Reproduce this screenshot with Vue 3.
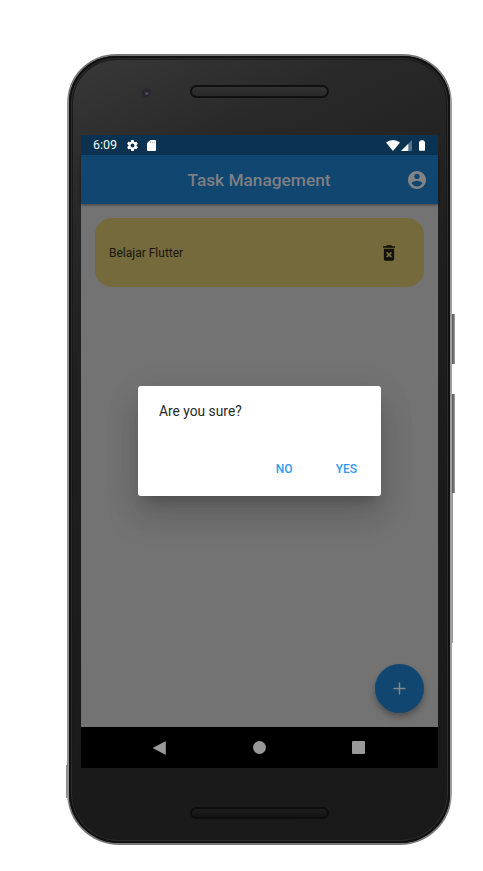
<script setup>
import { ref } from 'vue'

const tasks = ref([{ id: 1, name: 'Belajar Flutter' }])
</script>

<template>
  <main class="stage">
    <div class="phone">
      <i class="key power"></i>
      <i class="key volume"></i>
      <i class="key rail"></i>
      <i class="key edge"></i>
      <div class="face">
        <header class="forehead">
          <i class="camera"></i>
          <i class="grille"></i>
        </header>
        <section class="screen">
          <div class="status">
            <span class="clock">6:09</span>
            <svg class="gear" viewBox="2 2 20 20"><path fill="#fff" fill-rule="evenodd" d="M19.400 13a7.500 7.500 0 0 0 0-2l2.100-1.600a.5.5 0 0 0 .1-.6l-2-3.500a.5.5 0 0 0-.6-.2l-2.500 1a7.300 7.300 0 0 0-1.700-1l-.4-2.600A.5.5 0 0 0 14 2h-4a.5.5 0 0 0-.5.4l-.4 2.700a7.300 7.300 0 0 0-1.700 1l-2.500-1a.5.5 0 0 0-.6.200l-2 3.500a.5.5 0 0 0 .1.600L4.600 11a7.500 7.500 0 0 0 0 2l-2.100 1.600a.5.5 0 0 0-.1.600l2 3.500c.1.200.4.300.6.200l2.500-1a7.300 7.300 0 0 0 1.700 1l.4 2.700c0 .2.200.4.400.4h4c.2 0 .4-.2.500-.4l.4-2.700a7.300 7.300 0 0 0 1.700-1l2.500 1c.2.100.5 0 .6-.2l2-3.500a.5.5 0 0 0-.1-.6zM12 15.500a3.500 3.500 0 1 1 0-7 3.500 3.500 0 0 1 0 7z"/></svg>
            <svg class="sd" viewBox="0 0 10 12"><path fill="#fff" d="M3.500 0H9q1 0 1 1v10q0 1-1 1H1q-1 0-1-1V3.500z"/><path fill="#0b3351" fill-opacity=".35" d="M3.400 1.500h1v2h-1zM5.400 1.500h1v2h-1zM7.400 1.500h1v2h-1z"/></svg>
            <svg class="wifi" viewBox="0 0 14 11"><path fill="#fff" d="M0 2.600Q3.100 0 7 0t7 2.600L7 11z"/></svg>
            <svg class="signal" viewBox="0 0 12 12"><path fill="#55718a" d="M12 0v12H0z"/><path fill="#fff" d="M8 4v8H0z"/></svg>
            <svg class="battery" viewBox="0 0 7 12"><path fill="#fff" d="M1.500 0h4v1H6q1 0 1 1v9q0 1-1 1H1q-1 0-1-1V2q0-1 1-1h.5z"/></svg>
          </div>
          <div class="appbar">
            <h1>Task Management</h1>
            <svg class="account" viewBox="2 2 20 20"><path fill="#828488" d="M12 2C6.480 2 2 6.480 2 12s4.480 10 10 10 10-4.480 10-10S17.520 2 12 2zm0 3c1.660 0 3 1.340 3 3s-1.340 3-3 3-3-1.340-3-3 1.340-3 3-3zm0 14.200a7.200 7.200 0 0 1-6-3.220c.03-1.990 4-3.080 6-3.080 1.990 0 5.970 1.090 6 3.080a7.200 7.200 0 0 1-6 3.220z"/></svg>
          </div>
          <div class="content">
            <article v-for="task in tasks" :key="task.id" class="task">
              <span>{{ task.name }}</span>
              <svg class="trash" viewBox="5 3 14 18"><path fill="#11100a" fill-rule="evenodd" d="M6 19c0 1.100.9 2 2 2h8c1.100 0 2-.9 2-2V7H6zM8.460 11.880l1.410-1.410L12 12.590l2.120-2.120 1.410 1.410L13.410 14l2.120 2.120-1.410 1.410L12 15.410l-2.120 2.120-1.410-1.410L10.590 14zM15.500 4l-1-1h-5l-1 1H5v2h14V4z"/></svg>
            </article>
            <button class="fab" aria-label="Add">
              <svg viewBox="0 0 14 14"><path stroke="#858789" stroke-width="1.600" d="M7 .5v13M.5 7h13"/></svg>
            </button>
            <div class="dialog">
              <p>Are you sure?</p>
              <div class="actions">
                <button>NO</button>
                <button>YES</button>
              </div>
            </div>
          </div>
          <nav class="navbar">
            <svg class="back" viewBox="0 0 13 14"><path fill="#999" d="M12 .4q.8-.2.800.700v11.800q0 .9-.8.700L.4 7.400q-.5-.4 0-.8z"/></svg>
            <i class="home"></i>
            <i class="recent"></i>
          </nav>
        </section>
        <footer class="chin"><i class="grille low"></i></footer>
      </div>
    </div>
  </main>
</template>

<style>
body {
  background: #fff;
}
</style>

<style scoped>
* {
  box-sizing: border-box;
}
.stage {
  width: 483px;
  height: 871px;
  padding: 54px 0 0 67px;
  font-family: Roboto, "Liberation Sans", sans-serif;
  overflow: hidden;
}
.phone {
  position: relative;
  width: 385px;
  height: 791px;
  padding: 2px;
  border-radius: 49px 49px 52px 52px;
  background: linear-gradient(90deg, #777 0, #aaa 1px, #777 2px, #777 383px, #bbb 384px, #888 385px);
}
.key {
  position: absolute;
  left: 385px;
  width: 3px;
  background: linear-gradient(90deg, #555, #777 60%, #aaa);
}
.power {
  top: 260px;
  height: 50px;
}
.volume {
  top: 340px;
  height: 99px;
}
.rail {
  top: 439px;
  width: 1px;
  height: 150px;
  background: #999;
}
.edge {
  left: -1px;
  top: 711px;
  width: 1px;
  height: 33px;
  background: #888;
}
.face {
  display: flex;
  flex-direction: column;
  width: 381px;
  height: 787px;
  padding: 0 12px;
  border-radius: 47px 47px 50px 50px;
  background: linear-gradient(155deg, #393939 0, #292929 15%, #1f1f1f 35%, #1b1b1b 60%, #191919 100%);
  box-shadow: inset 0 0 0 2px #111, inset 0 0 0 3px #2d2d2d, inset 0 0 0 4px #191919;
}
.forehead {
  display: flex;
  flex: 0 0 79px;
  align-items: flex-start;
}
.camera {
  width: 12px;
  height: 12px;
  margin: 30px 0 0 58px;
  border-radius: 50%;
  background: radial-gradient(circle at 65% 62%, #57485a 0 1px, #2a2634 2px, #28262c 4px, #313131 6px);
}
.grille {
  width: 139px;
  height: 13px;
  margin: 29px 0 0 39px;
  border: 2px solid #101010;
  border-radius: 7px;
  background: linear-gradient(#323232, #292929);
}
.screen {
  display: flex;
  flex: 0 0 633px;
  flex-direction: column;
  width: 357px;
}
.status {
  display: flex;
  flex: 0 0 20px;
  align-items: center;
  padding: 0 12px;
  background: #0b3351;
  color: #f4f6f8;
}
.clock {
  width: 34px;
  font-size: 12.500px;
  line-height: 20px;
}
.gear {
  width: 11px;
  height: 11px;
}
.sd {
  width: 9px;
  height: 11px;
  margin-left: 9px;
}
.wifi {
  width: 14px;
  height: 11px;
  margin-left: auto;
}
.signal {
  width: 11px;
  height: 11px;
  margin-left: 1px;
}
.battery {
  width: 6px;
  height: 11px;
  margin: 0 1px 0 7px;
}
.appbar {
  z-index: 1;
  display: grid;
  flex: 0 0 49px;
  grid-template-columns: 327px 18px;
  align-items: center;
  background: #114670;
  box-shadow: 0 1px 3px #0007;
}
h1 {
  margin: 0 0 0 29px;
  color: #7d7f82;
  font-size: 17.300px;
  font-weight: 500;
  line-height: 20px;
  text-align: center;
}
.account {
  width: 18px;
  height: 18px;
}
.content {
  position: relative;
  display: flex;
  flex: 0 0 523px;
  flex-direction: column;
  justify-content: space-between;
  padding: 14px;
  background: #737373;
}
.task {
  display: flex;
  align-items: center;
  justify-content: space-between;
  height: 69px;
  padding: 0 29px 0 14px;
  border-radius: 17px;
  background: #756a3b;
  color: #18160f;
  font-size: 12px;
}
.trash {
  width: 12px;
  height: 16px;
}
button {
  padding: 0;
  border: 0;
  background: none;
  font-family: inherit;
}
.fab {
  display: flex;
  align-items: center;
  justify-content: center;
  align-self: flex-end;
  width: 49px;
  height: 49px;
  border-radius: 50%;
  background: #114670;
  box-shadow: 0 3px 5px #0003, 0 5px 9px #0002;
}
.fab svg {
  width: 13px;
  height: 13px;
}
.dialog {
  position: absolute;
  top: 182px;
  left: 57px;
  display: flex;
  flex-direction: column;
  justify-content: space-between;
  width: 243px;
  height: 110px;
  padding: 17px 24px 19px 21px;
  border-radius: 3px;
  background: #fff;
  box-shadow: 0 10px 13px -6px #0003, 0 20px 32px 3px #0002, 0 8px 40px 7px #00000009;
}
.dialog p {
  margin: 0;
  color: #292929;
  font-size: 13.800px;
  line-height: 17px;
}
.actions {
  display: flex;
  justify-content: flex-end;
  gap: 43px;
}
.actions button {
  color: #3199ed;
  font-size: 12px;
  font-weight: 500;
  line-height: 16px;
}
.navbar {
  display: flex;
  flex: 0 0 41px;
  align-items: center;
  padding: 0 73px 0 72px;
  justify-content: space-between;
  background: #000;
}
.back {
  width: 13px;
  height: 14px;
}
.home {
  width: 13px;
  height: 13px;
  border-radius: 50%;
  background: #999;
}
.recent {
  width: 13px;
  height: 13px;
  border-radius: 1px;
  background: #999;
}
.chin {
  display: flex;
  flex: 1;
  justify-content: center;
}
.low {
  height: 12px;
  margin: 39px 0 0;
  border-color: #0d0d0d;
  background: linear-gradient(#1d1d1d, #121212);
}
</style>
